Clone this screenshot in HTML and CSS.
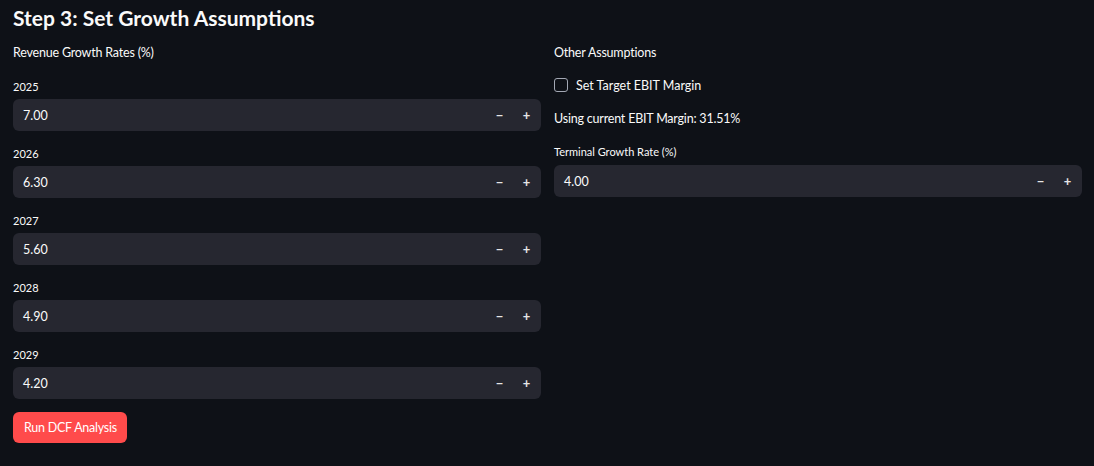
FILE: index.html
```html
<!DOCTYPE html>
<html>
<head>
<meta charset="utf-8">
<link rel="stylesheet" href="styles.css">
</head>
<body>
<div class="page">
  <h2 class="title">Step 3: Set Growth Assumptions</h2>
  <div class="cols">
    <div class="col">
      <div class="section-head">Revenue Growth Rates (%)</div>
      <div class="fields">
        <div class="field">
          <div class="label">2025</div>
          <div class="numinput"><span class="val">7.00</span><span class="step">−</span><span class="step">+</span></div>
        </div>
        <div class="field">
          <div class="label">2026</div>
          <div class="numinput"><span class="val">6.30</span><span class="step">−</span><span class="step">+</span></div>
        </div>
        <div class="field">
          <div class="label">2027</div>
          <div class="numinput"><span class="val">5.60</span><span class="step">−</span><span class="step">+</span></div>
        </div>
        <div class="field">
          <div class="label">2028</div>
          <div class="numinput"><span class="val">4.90</span><span class="step">−</span><span class="step">+</span></div>
        </div>
        <div class="field">
          <div class="label">2029</div>
          <div class="numinput"><span class="val">4.20</span><span class="step">−</span><span class="step">+</span></div>
        </div>
      </div>
      <div class="btn-row"><button class="btn-primary">Run DCF Analysis</button></div>
    </div>
    <div class="col">
      <div class="section-head">Other Assumptions</div>
      <label class="check"><span class="box"></span><span>Set Target EBIT Margin</span></label>
      <div class="info">Using current EBIT Margin: 31.51%</div>
      <div class="field terminal">
        <div class="label">Terminal Growth Rate (%)</div>
        <div class="numinput"><span class="val">4.00</span><span class="step">−</span><span class="step">+</span></div>
      </div>
    </div>
  </div>
</div>
</body>
</html>
```

FILE: styles.css
```css
html, body {
  margin: 0;
  padding: 0;
  background: #0e1117;
  color: #fafafa;
  font-family: "Source Sans Pro", Lato, "Noto Sans", sans-serif;
  height: 100%;
}
.page {
  padding: 0 12px 0 13px;
}
.title {
  margin: 0;
  font-size: 21px;
  font-weight: 700;
  line-height: 36px;
  height: 36px;
}
.cols {
  display: grid;
  grid-template-columns: 1fr 1fr;
  column-gap: 13px;
}
.col {
  display: flex;
  flex-direction: column;
}
.section-head {
  font-size: 12.5px;
  letter-spacing: -0.2px;
  line-height: 18px;
  margin-top: 8px;
}
.fields {
  display: flex;
  flex-direction: column;
  gap: 16px;
  margin-top: 18px;
}
.field {
  display: flex;
  flex-direction: column;
}
.label {
  font-size: 11px;
  line-height: 13px;
  margin-bottom: 6px;
}
.numinput {
  display: flex;
  align-items: center;
  height: 32px;
  background: #262730;
  border-radius: 6px;
  font-size: 12.5px;
}
.val {
  flex: 1;
  padding-left: 10px;
}
.step {
  width: 27px;
  text-align: center;
  font-weight: 700;
  font-size: 13px;
  color: #e6e6e6;
}
.step:last-child {
  margin-right: 1px;
}
.btn-row {
  margin-top: 13px;
}
.btn-primary {
  background: #ff4b4b;
  color: #fff;
  border: none;
  border-radius: 6px;
  height: 31px;
  padding: 0 10px 0 11px;
  font-family: inherit;
  font-size: 12.5px;
  letter-spacing: -0.25px;
}
.check {
  display: flex;
  align-items: center;
  gap: 8px;
  font-size: 12.5px;
  margin-top: 14px;
  height: 18px;
}
.box {
  width: 12px;
  height: 12px;
  border: 1px solid #a3a8b4;
  border-radius: 3px;
}
.info {
  font-size: 12.5px;
  letter-spacing: -0.2px;
  line-height: 18px;
  margin-top: 16px;
}
.terminal .label {
  margin-top: 17px;
  margin-bottom: 7px;
}
```
